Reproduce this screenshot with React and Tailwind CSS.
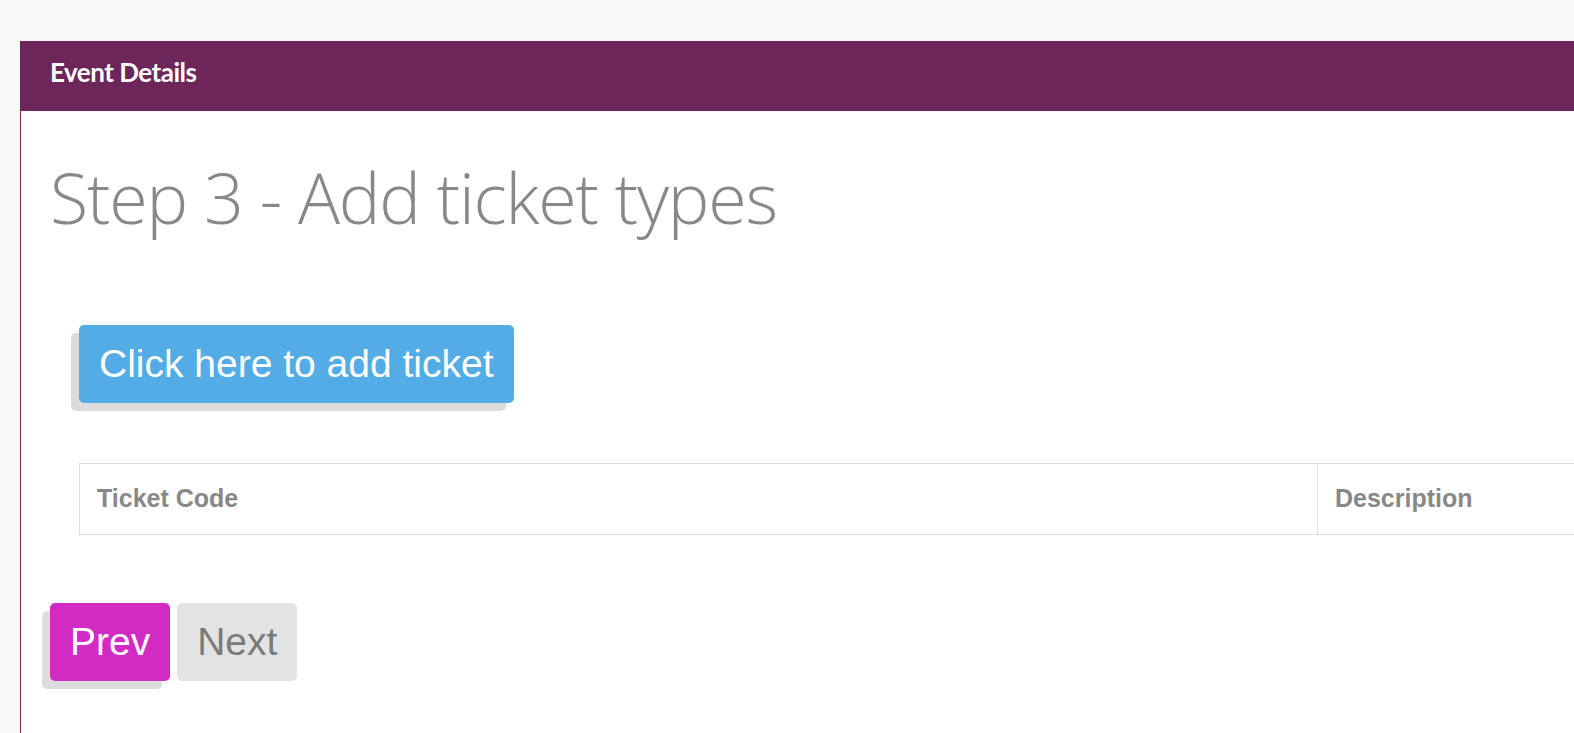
import React from 'react';

/* botão com "sombra" deslocada (bloco cinza atrás) */
function ShadowButton({ className, children }) {
  return (
    <div className="relative inline-block">
      <div className="absolute left-[-8px] top-[8px] h-full w-full rounded-[5px] bg-[#dcdcdc]" />
      <button className={`relative rounded-[5px] px-5 text-[39px] leading-[78px] ${className}`}>
        {children}
      </button>
    </div>
  );
}

export default function App() {
  return (
    <div className="min-h-screen w-full overflow-hidden bg-[#f8f9fb] pt-[41px] font-['Liberation_Sans',Arial,sans-serif]">
      <div className="ml-[20px] w-[1600px] border-l border-[#6d2659] bg-white pb-[54px]">
        {/* header */}
        <div className="flex h-[70px] items-center bg-[#6d2659] pb-[8px] pl-[29px]">
          <h1 className="font-['Lato',sans-serif] text-[26px] font-bold tracking-[-0.5px] text-white">
            Event Details
          </h1>
        </div>

        <div className="pl-[29px]">
          <h2 className="mt-[44px] font-['Open_Sans',sans-serif] text-[70px] font-light leading-[84px] tracking-[-1.2px] text-[#888888]">
            Step 3 - Add ticket types
          </h2>

          <div className="ml-[29px] mt-[86px]">
            <ShadowButton className="bg-[#53ace5] text-white">Click here to add ticket</ShadowButton>
          </div>

          <table className="ml-[29px] mt-[60px] w-[1540px] border-collapse">
            <thead>
              <tr className="h-[71px]">
                <th className="w-[1238px] border border-[#dddddd] px-[17px] text-left text-[25px] font-bold text-[#888888]">
                  Ticket Code
                </th>
                <th className="border border-[#dddddd] px-[17px] text-left text-[25px] font-bold text-[#888888]">
                  Description
                </th>
              </tr>
            </thead>
          </table>

          <div className="mt-[68px] flex gap-[7px]">
            <ShadowButton className="bg-[#d12bc4] text-white">Prev</ShadowButton>
            <button className="rounded-[5px] bg-[#e3e3e3] px-5 text-[39px] leading-[78px] text-[#7a7a7a]">
              Next
            </button>
          </div>
        </div>
      </div>
    </div>
  );
}
